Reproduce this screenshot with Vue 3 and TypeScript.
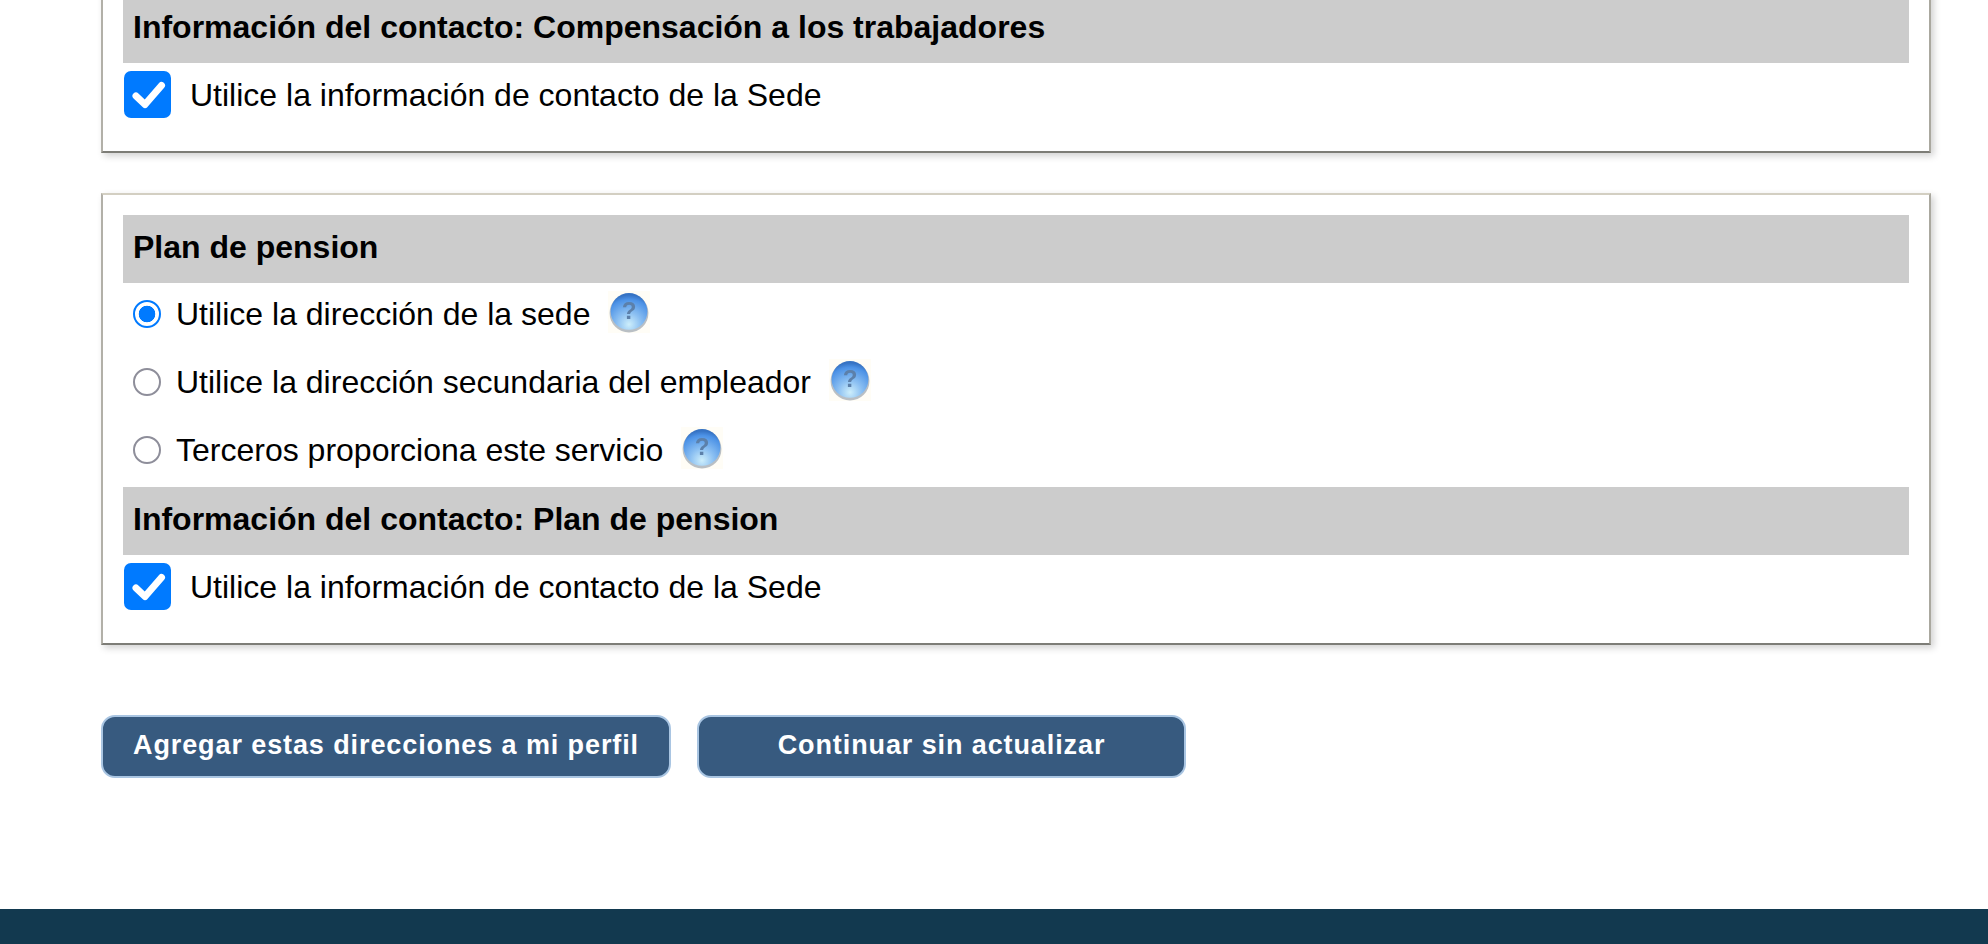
<script setup lang="ts">
interface RadioRow {
  label: string
  checked: boolean
}

const radios: RadioRow[] = [
  { label: 'Utilice la dirección de la sede', checked: true },
  { label: 'Utilice la dirección secundaria del empleador', checked: false },
  { label: 'Terceros proporciona este servicio', checked: false },
]
</script>

<template>
  <div class="page">
    <main class="content">
      <section class="card first">
        <h2 class="bar">Información del contacto: Compensación a los trabajadores</h2>
        <label class="check-row">
          <span class="check">
            <svg viewBox="0 0 47 47" width="47" height="47">
              <path d="M12 25 L21 33.5 L37.5 14.5" fill="none" stroke="#fff" stroke-width="7" stroke-linecap="round" stroke-linejoin="round" />
            </svg>
          </span>
          <span class="check-label">Utilice la información de contacto de la Sede</span>
        </label>
      </section>

      <section class="card">
        <h2 class="bar">Plan de pension</h2>
        <div class="radios">
          <div v-for="(r, i) in radios" :key="r.label" class="radio-row">
            <span class="radio" :class="{ on: r.checked }"></span>
            <span>{{ r.label }}</span>
            <svg class="help" viewBox="0 0 40 40" width="42" height="42">
              <defs>
                <radialGradient :id="'g' + i" cx="50%" cy="85%" r="80%">
                  <stop offset="0%" stop-color="#cdeefb" />
                  <stop offset="40%" stop-color="#8cc0f2" />
                  <stop offset="85%" stop-color="#4c92e6" />
                  <stop offset="100%" stop-color="#3673c4" />
                </radialGradient>
              </defs>
              <rect x="0" y="0" width="40" height="40" fill="#fffdf6" />
              <circle cx="20" cy="21" r="18.5" fill="#8a96a3" opacity=".6" />
              <circle cx="20" cy="19.5" r="17.5" :fill="`url(#g${i})`" />
              <text x="20" y="27" text-anchor="middle" class="help-mark">?</text>
            </svg>
          </div>
        </div>
        <h2 class="bar">Información del contacto: Plan de pension</h2>
        <label class="check-row">
          <span class="check">
            <svg viewBox="0 0 47 47" width="47" height="47">
              <path d="M12 25 L21 33.5 L37.5 14.5" fill="none" stroke="#fff" stroke-width="7" stroke-linecap="round" stroke-linejoin="round" />
            </svg>
          </span>
          <span class="check-label">Utilice la información de contacto de la Sede</span>
        </label>
      </section>

      <div class="actions">
        <button class="btn btn-add" type="button">Agregar estas direcciones a mi perfil</button>
        <button class="btn btn-skip" type="button">Continuar sin actualizar</button>
      </div>
    </main>
    <footer class="footer"></footer>
  </div>
</template>

<style>
html, body { margin: 0; background: #fff; }
</style>

<style scoped>
.page {
  height: 944px;
  overflow: hidden;
  display: flex;
  flex-direction: column;
  font-family: "Liberation Sans", Arial, sans-serif;
  color: #000;
  font-size: 32px;
}
.content {
  flex: 1;
  margin-top: -27px;
  padding: 0 57px 0 101px;
  display: flex;
  flex-direction: column;
}
.card {
  box-sizing: border-box;
  background: #fff;
  padding: 20px 20px 33px 20px;
  border-style: solid;
  border-width: 2px;
  border-color: #d3cfc2 #aaa89f #7d7d77 #b2b0a8;
  box-shadow: 3px 3px 7px rgba(0, 0, 0, 0.18);
}
.first { margin-bottom: 40px; }
.bar {
  margin: 0;
  height: 68px;
  line-height: 64px;
  padding-left: 10px;
  background: #cccccc;
  font-size: 32px;
  font-weight: 700;
}
.check-row {
  display: flex;
  align-items: center;
  gap: 19px;
  height: 47px;
  margin: 8px 0 0 1px;
}
.check-label { padding-top: 2px; }
.check {
  width: 47px;
  height: 47px;
  border-radius: 7px;
  background: #007aff;
  display: block;
}
.check svg { display: block; }
.radios { display: flex; flex-direction: column; padding-bottom: 3px; margin-top: -3px; }
.radio-row {
  display: flex;
  align-items: center;
  height: 68px;
  padding-left: 10px;
}
.radio {
  box-sizing: border-box;
  width: 28px;
  height: 28px;
  border-radius: 50%;
  border: 2px solid #8e8e9a;
  background: #fff;
  margin-right: 15px;
  flex: none;
}
.radio.on {
  border-color: #007aff;
  background: radial-gradient(circle, #007aff 0 8px, #fff 8.6px);
}
.help { margin-left: 18px; margin-top: -5px; flex: none; filter: blur(0.7px); }
.help-mark {
  font-family: "Liberation Sans", Arial, sans-serif;
  font-size: 23px;
  font-weight: 700;
  fill: #5c80aa;
}
.actions {
  display: flex;
  gap: 26px;
  margin-top: 70px;
}
.btn {
  box-sizing: border-box;
  height: 63px;
  border-radius: 14px;
  border: 2px solid #a9c5e2;
  background: #375a7f;
  color: #fff;
  font-family: "Liberation Sans", Arial, sans-serif;
  font-weight: 700;
  font-size: 27px;
  letter-spacing: 0.9px;
  padding: 0 0 2px;
  white-space: nowrap;
}
.btn-add { width: 570px; }
.btn-skip { width: 489px; }
.footer {
  height: 35px;
  background: #12394f;
  flex: none;
}
</style>
